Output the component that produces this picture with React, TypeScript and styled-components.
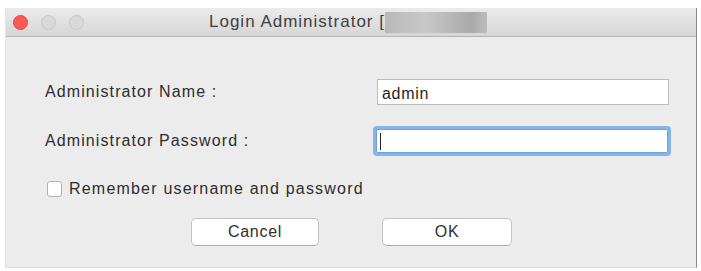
import React from "react";
import styled, { createGlobalStyle } from "styled-components";

const Global = createGlobalStyle`
  html, body { margin: 0; padding: 0; background: #ffffff; }
  body { font-family: "Liberation Sans", Arial, Helvetica, sans-serif; color: #2b2b2b; }
  * { box-sizing: border-box; }
`;

const Window = styled.div`
  margin: 8px 0 0 5px;
  width: 692px;
  height: 260px;
  background: #ececec;
  border-right: 1px solid #8a8a8a;
  border-left: 1px solid #e2e2e2;
  border-bottom: 1px solid #dcdcdc;
  display: flex;
  flex-direction: column;
`;

const TitleBar = styled.div`
  height: 29px;
  flex: none;
  background: linear-gradient(#ebebeb, #d6d6d6);
  border-bottom: 1px solid #b4b4b4;
  display: flex;
  align-items: center;
  padding-left: 7px;
`;

const Lights = styled.div`
  display: flex;
  gap: 13px;
`;

const Light = styled.span<{ $c: string; $b: string }>`
  width: 15px;
  height: 15px;
  border-radius: 50%;
  background: ${(p) => p.$c};
  border: 1px solid ${(p) => p.$b};
`;

const Title = styled.div`
  margin-left: 125px;
  font-size: 17px;
  letter-spacing: 1px;
  color: #3f3f3f;
  display: flex;
  align-items: center;
  height: 100%;
`;

const Blur = styled.span`
  display: inline-block;
  width: 102px;
  height: 21px;
  background: linear-gradient(90deg, #b9b9b9, #c8c8c8 40%, #a9a9a9 85%, #bdbdbd);
  filter: blur(0.6px);
`;

const Body = styled.div`
  flex: 1;
  padding: 42px 0 0 39px;
  display: flex;
  flex-direction: column;
`;

const Row = styled.div<{ $mt?: number }>`
  display: flex;
  align-items: center;
  margin-top: ${(p) => p.$mt ?? 0}px;
`;

const Label = styled.label`
  width: 332px;
  font-size: 16px;
  letter-spacing: 1.1px;
  color: #2e2e2e;
`;

const Input = styled.div<{ $focus?: boolean }>`
  width: ${(p) => (p.$focus ? 298 : 292)}px;
  height: ${(p) => (p.$focus ? 30 : 26)}px;
  margin-left: ${(p) => (p.$focus ? -4 : 0)}px;
  background: #fff;
  border: ${(p) => (p.$focus ? "3px solid #84b4e8" : "1px solid #bdbdbd")};
  border-radius: ${(p) => (p.$focus ? 4 : 0)}px;
  box-shadow: ${(p) => (p.$focus ? "inset 0 0 0 1px #6fa2dc" : "none")};
  font-size: 16px;
  letter-spacing: 0.7px;
  color: #1f1f1f;
  display: flex;
  align-items: center;
  padding-left: 4px;
  padding-top: 3px;
`;

const Caret = styled.span`
  display: inline-block;
  width: 1px;
  height: 17px;
  background: #222;
  margin-top: -2px;
`;

const Check = styled.span`
  width: 15px;
  height: 16px;
  background: #fff;
  border: 1px solid #b0b0b0;
  border-radius: 3px;
  margin-left: 2px;
`;

const CheckText = styled.span`
  font-size: 16px;
  letter-spacing: 1.2px;
  margin-left: 7px;
  color: #2e2e2e;
`;

const Buttons = styled.div`
  display: flex;
  justify-content: center;
  gap: 63px;
  margin-top: 20px;
  margin-left: -39px;
  padding-left: 1px;
`;

const Button = styled.button<{ $w: number }>`
  width: ${(p) => p.$w}px;
  height: 28px;
  background: #fff;
  border: 1px solid #c4c4c4;
  border-bottom-color: #aaaaaa;
  border-radius: 5px;
  font-family: inherit;
  font-size: 16px;
  letter-spacing: 0.7px;
  color: #2e2e2e;
  padding: 0;
`;

export default function App() {
  return (
    <>
      <Global />
      <Window>
        <TitleBar>
          <Lights>
            <Light $c="#fc5b57" $b="#e24440" />
            <Light $c="#d9d9d9" $b="#c8c8c8" />
            <Light $c="#d9d9d9" $b="#c8c8c8" />
          </Lights>
          <Title>
            Login Administrator [<Blur />
          </Title>
        </TitleBar>
        <Body>
          <Row>
            <Label>Administrator Name :</Label>
            <Input>admin</Input>
          </Row>
          <Row $mt={21}>
            <Label>Administrator Password :</Label>
            <Input $focus>
              <Caret />
            </Input>
          </Row>
          <Row $mt={24}>
            <Check />
            <CheckText>Remember username and password</CheckText>
          </Row>
          <Buttons>
            <Button $w={128}>Cancel</Button>
            <Button $w={130}>OK</Button>
          </Buttons>
        </Body>
      </Window>
    </>
  );
}
